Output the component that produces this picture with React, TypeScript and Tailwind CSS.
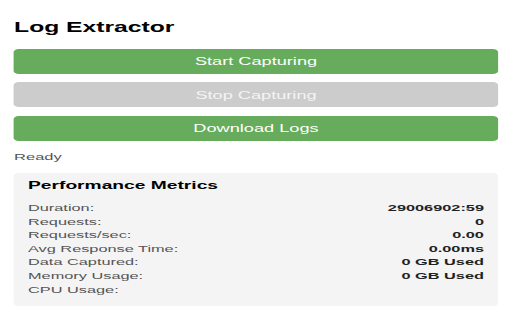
import React from "react";

// The reference is a narrow popup stretched wide, so the panel is laid out at
// its narrow width and stretched horizontally as a whole.
const metrics: [string, string][] = [
  ["Duration:", "29006902:59"],
  ["Requests:", "0"],
  ["Requests/sec:", "0.00"],
  ["Avg Response Time:", "0.00ms"],
  ["Data Captured:", "0 GB Used"],
  ["Memory Usage:", "0 GB Used"],
  ["CPU Usage:", ""],
];

export default function App() {
  return (
    <div className="h-[320px] w-[512px] overflow-hidden bg-white font-['Liberation_Sans',Arial,sans-serif]">
      <div className="w-[301.18px] origin-top-left scale-x-[1.7] px-[8.3px] pt-[17px]">
        <h1 className="text-[14.5px] leading-[20px] font-bold text-black">Log Extractor</h1>

        <div className="mt-[12px] flex flex-col gap-[8.3px]">
          <button className="h-[25px] w-full rounded-[3px] bg-[#66ac5c] text-[10.7px] text-white">
            Start Capturing
          </button>
          <button disabled className="h-[25px] w-full rounded-[3px] bg-[#cccccc] text-[10.7px] text-[#f4f4f4]">
            Stop Capturing
          </button>
          <button className="h-[25px] w-full rounded-[3px] bg-[#66ac5c] text-[10.7px] text-white">
            Download Logs
          </button>
        </div>

        <div className="mt-[9px] text-[9.7px] leading-[14px] text-[#555]">Ready</div>

        <div className="mt-[9.6px] rounded-[3px] bg-[#f4f4f4] px-[8.2px] pt-[5px] pb-[9.6px]">
          <h2 className="text-[11.3px] leading-[14px] font-bold text-black">Performance Metrics</h2>
          <div className="mt-[9.2px] flex flex-col">
            {metrics.map(([label, value]) => (
              <div key={label} className="flex h-[13.6px] items-center justify-between text-[9.6px]">
                <span className="text-[#555]">{label}</span>
                <span className="font-bold text-[#222]">{value}</span>
              </div>
            ))}
          </div>
        </div>
      </div>
    </div>
  );
}
